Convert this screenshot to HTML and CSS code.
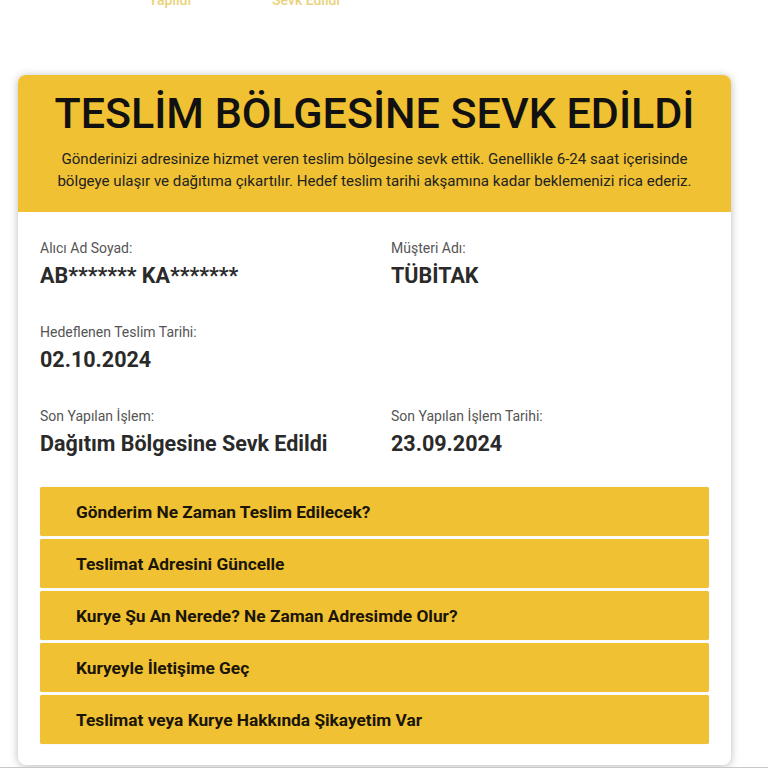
FILE: index.html
```html
<!DOCTYPE html>
<html lang="tr">
<head>
<meta charset="utf-8">
<title>Gönderi Takip</title>
<link rel="stylesheet" href="styles.css">
</head>
<body>
<div class="steps">
  <span class="step">Yapıldı</span>
  <span class="step">Sevk Edildi</span>
</div>
<div class="card">
  <div class="card-head">
    <h1 class="title">TESLİM BÖLGESİNE SEVK EDİLDİ</h1>
    <p class="desc">Gönderinizi adresinize hizmet veren teslim bölgesine sevk ettik. Genellikle 6-24 saat içerisinde<br>bölgeye ulaşır ve dağıtıma çıkartılır. Hedef teslim tarihi akşamına kadar beklemenizi rica ederiz.</p>
  </div>
  <div class="card-body">
    <div class="fields">
      <div class="field">
        <div class="label">Alıcı Ad Soyad:</div>
        <div class="value">AB******* KA*******</div>
      </div>
      <div class="field">
        <div class="label">Müşteri Adı:</div>
        <div class="value">TÜBİTAK</div>
      </div>
      <div class="field">
        <div class="label">Hedeflenen Teslim Tarihi:</div>
        <div class="value">02.10.2024</div>
      </div>
      <div class="field"></div>
      <div class="field">
        <div class="label">Son Yapılan İşlem:</div>
        <div class="value">Dağıtım Bölgesine Sevk Edildi</div>
      </div>
      <div class="field">
        <div class="label">Son Yapılan İşlem Tarihi:</div>
        <div class="value">23.09.2024</div>
      </div>
    </div>
    <div class="actions">
      <div class="action">Gönderim Ne Zaman Teslim Edilecek?</div>
      <div class="action">Teslimat Adresini Güncelle</div>
      <div class="action">Kurye Şu An Nerede? Ne Zaman Adresimde Olur?</div>
      <div class="action">Kuryeyle İletişime Geç</div>
      <div class="action">Teslimat veya Kurye Hakkında Şikayetim Var</div>
    </div>
  </div>
</div>
<div class="bottom-line"></div>
</body>
</html>
```
FILE: styles.css
```css
html, body {
  margin: 0;
  padding: 0;
  background: #ffffff;
}
body {
  font-family: Roboto, "Noto Sans", "Liberation Sans", sans-serif;
  width: 768px;
  height: 768px;
  overflow: hidden;
  position: relative;
}
.steps {
  display: flex;
  gap: 16px;
  padding-left: 110px;
  height: 75px;
  margin-top: -8px;
}
.step {
  width: 120px;
  text-align: center;
  font-size: 14px;
  line-height: 16px;
  font-weight: 500;
  color: #ead27a;
}
.card {
  margin: 8px 37px 0 18px;
  background: #ffffff;
  border-radius: 8px;
  box-shadow: 0 1px 8px rgba(0, 0, 0, 0.28);
  overflow: hidden;
}
.card-head {
  background: #f0c132;
  text-align: center;
  padding: 12px 10px 20px;
}
.title {
  margin: 0;
  font-size: 43px;
  line-height: 52px;
  font-weight: 500;
  color: #111111;
}
.desc {
  margin: 9px 0 0;
  font-size: 15.1px;
  line-height: 22px;
  color: #222222;
}
.card-body {
  padding: 26px 22px 21px;
}
.fields {
  display: grid;
  grid-template-columns: 351px 1fr;
  row-gap: 32px;
}
.label {
  font-size: 14px;
  line-height: 20px;
  color: #555555;
}
.value {
  margin-top: 4px;
  font-size: 21.5px;
  line-height: 28px;
  font-weight: 700;
  color: #2a2a2a;
}
.actions {
  margin-top: 29px;
  display: flex;
  flex-direction: column;
  gap: 3px;
}
.action {
  height: 49px;
  display: flex;
  align-items: center;
  padding-left: 36px;
  background: #f0c132;
  border-radius: 2px;
  box-shadow: 0 0 1px rgba(0, 0, 0, 0.2);
  font-size: 17.3px;
  font-weight: 700;
  color: #1a1508;
}
.bottom-line {
  position: absolute;
  left: 0;
  right: 0;
  bottom: 0;
  height: 1px;
  background: #c8c8c8;
}
```
